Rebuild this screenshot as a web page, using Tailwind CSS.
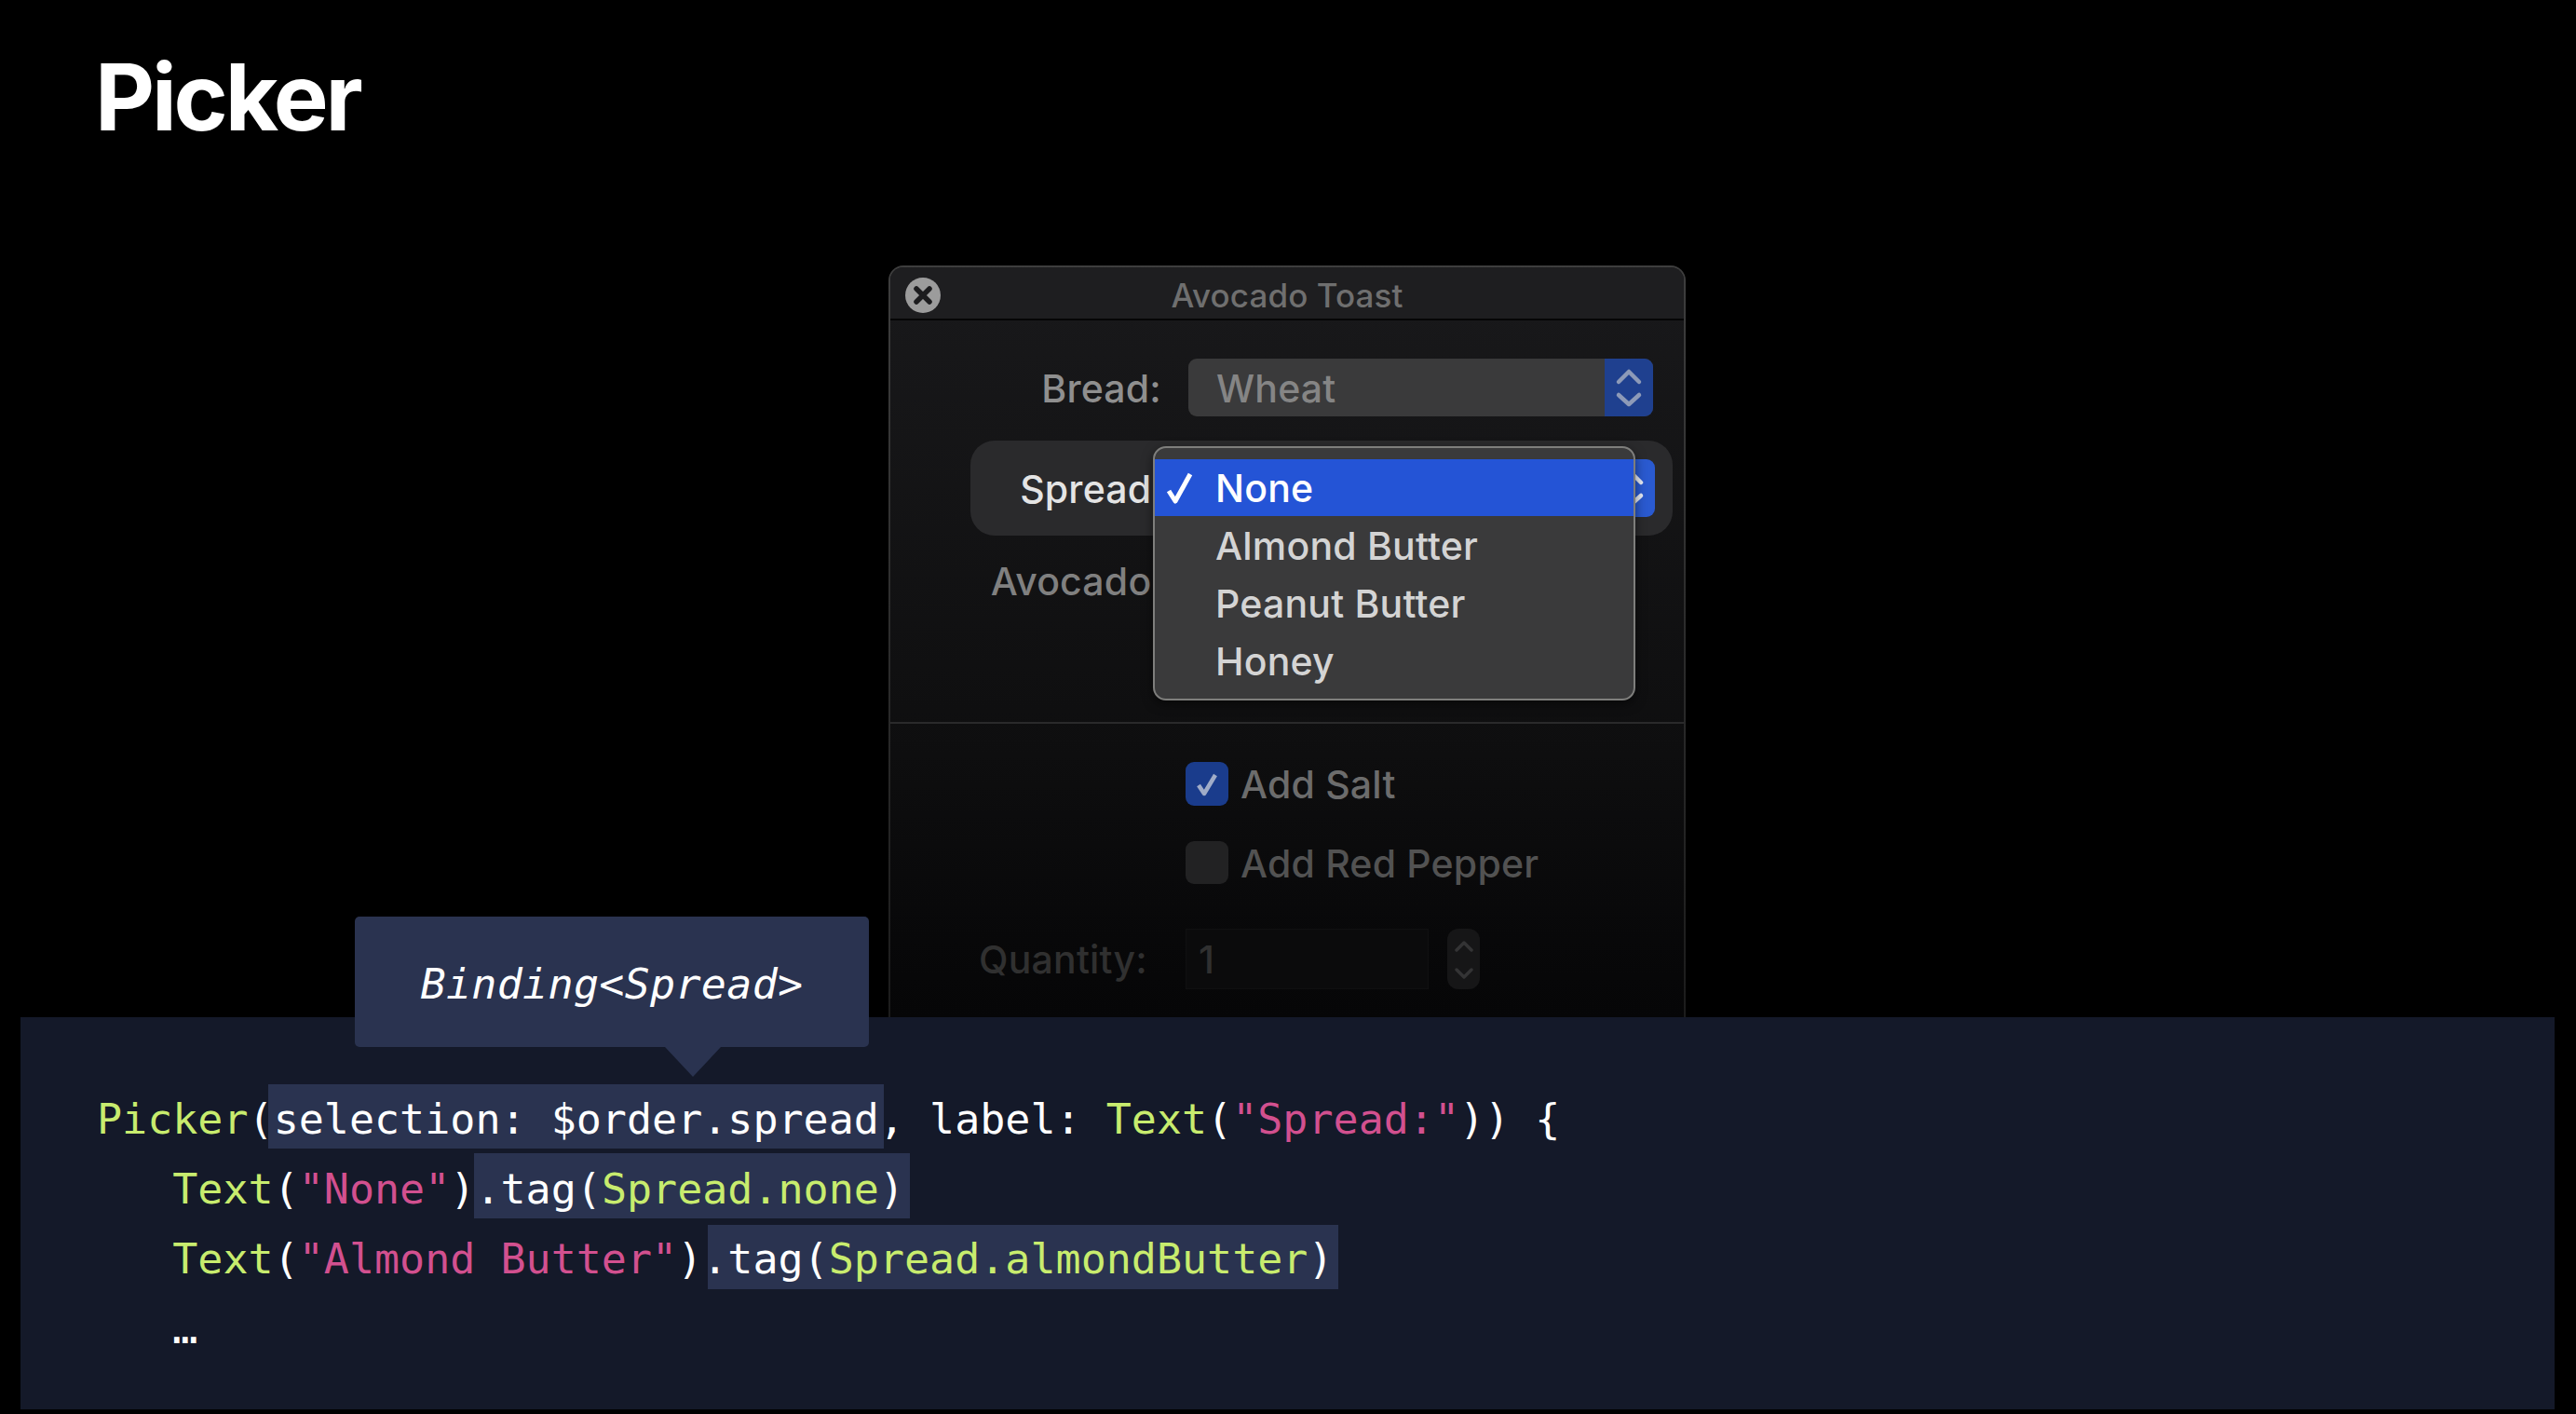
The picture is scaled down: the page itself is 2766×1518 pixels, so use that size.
<!DOCTYPE html>
<html>
<head>
<meta charset="utf-8">
<script src="https://cdn.jsdelivr.net/npm/@tailwindcss/browser@4"></script>
<title>Picker</title>
</head>
<body class="bg-black">
<div class="relative w-[2766px] h-[1518px] overflow-hidden bg-black flex flex-col font-['Inter',sans-serif]">
  <!-- Header -->
  <header class="h-[285px] shrink-0 pl-[102px] pt-[44px]">
    <h1 class="text-[99px] leading-[120px] font-bold tracking-[-3.2px] text-white">Picker</h1>
  </header>

  <!-- Window -->
  <div class="relative ml-[954px] w-[856px] h-[807px] shrink-0 rounded-t-[16px] bg-gradient-to-b from-[#3e3e3e] via-[#2c2c2c] to-[#1c1c1c] px-[2px] pt-[2px]">
    <div class="h-full rounded-t-[14px] bg-gradient-to-b from-[#19191b] via-[#0e0e0f] via-65% to-[#060607] flex flex-col">
      <div class="relative h-[57px] shrink-0 flex items-center justify-center bg-[#1e1e20] border-b-2 border-[#060606] rounded-t-[14px]">
        <svg class="absolute left-[16px] top-[10px]" width="38" height="40" viewBox="0 0 38 40"><circle cx="19" cy="20" r="19" fill="#9c9c9c"/><path d="M12 13 L26 27 M26 13 L12 27" stroke="#1c1c1e" stroke-width="5.5" stroke-linecap="round"/></svg>
        <span class="pt-[5px] text-[35px] font-medium text-[#6f6f6f] tracking-[0.1px]">Avocado Toast</span>
      </div>

      <!-- Bread -->
      <div class="mt-[41px] h-[62px] flex items-center shrink-0">
        <div class="w-[291px] pt-[3px] text-right text-[41px] font-medium tracking-[0.2px] text-[#8f8f8f]">Bread:</div>
        <div class="ml-[29px] w-[499px] h-[62px] flex rounded-[9px] overflow-hidden bg-[#3a3a3b]">
          <div class="flex-1 pl-[30px] pt-[3px] flex items-center text-[41px] font-medium tracking-[0.2px] text-[#858585]">Wheat</div>
          <div class="w-[52px] bg-[#1f408f] flex items-center justify-center">
            <svg width="30" height="44" viewBox="0 0 30 44" fill="none" stroke="#8d9ab8" stroke-width="4.5" stroke-linecap="round" stroke-linejoin="round"><path d="M4 16 L15 5 L26 16"/><path d="M4 30 L15 40 L26 30"/></svg>
          </div>
        </div>
      </div>

      <!-- Spread -->
      <div class="mt-[26px] ml-[86px] w-[754px] h-[102px] shrink-0 rounded-[26px] bg-[#2a2a2c] flex items-center">
        <div class="w-[207px] pt-[3px] text-right text-[41px] font-medium tracking-[0.2px] text-[#e4e4e4]">Spread:</div>
        <div class="ml-[27px] w-[501px] h-[62px] rounded-[9px] bg-[#2a5ad0] flex justify-end overflow-hidden">
          <div class="w-[52px] flex items-center justify-center">
            <svg width="30" height="44" viewBox="0 0 30 44" fill="none" stroke="#e8ecf5" stroke-width="4.5" stroke-linecap="round" stroke-linejoin="round"><path d="M4 16 L15 5 L26 16"/><path d="M4 30 L15 40 L26 30"/></svg>
          </div>
        </div>
      </div>

      <!-- Avocado -->
      <div class="mt-[17px] h-[62px] shrink-0 flex items-center">
        <div class="w-[293px] pt-[3px] text-right text-[41px] font-medium tracking-[0.2px] text-[#808080]">Avocado:</div>
      </div>

      <div class="mt-[121px] h-[2px] shrink-0 bg-[#2a2a2b]"></div>

      <!-- Checkboxes -->
      <div class="mt-[41px] ml-[317px] h-[47px] shrink-0 flex items-center">
        <div class="w-[46px] h-[47px] rounded-[9px] bg-[#1a3c8c] flex items-center justify-center">
          <svg width="32" height="32" viewBox="0 0 32 32" fill="none" stroke="#a0acc8" stroke-width="4.5" stroke-linejoin="round"><path d="M7 17 L13 26 L25 6"/></svg>
        </div>
        <span class="ml-[13px] pt-[3px] text-[41px] font-medium tracking-[0.2px] text-[#6c6c6c]">Add Salt</span>
      </div>
      <div class="mt-[38px] ml-[317px] h-[46px] shrink-0 flex items-center">
        <div class="w-[46px] h-[46px] rounded-[9px] bg-[#222223]"></div>
        <span class="ml-[13px] pt-[3px] text-[41px] font-medium tracking-[0.2px] text-[#525252]">Add Red Pepper</span>
      </div>

      <!-- Quantity -->
      <div class="mt-[48px] h-[65px] shrink-0 flex items-center">
        <div class="w-[276px] pt-[3px] text-right text-[41px] font-medium tracking-[0.2px] text-[#303030]">Quantity:</div>
        <div class="ml-[41px] w-[261px] h-[65px] bg-[#0b0b0c] border border-[#101011] pl-[13px] pt-[3px] flex items-center text-[41px] font-medium text-[#303030]">1</div>
        <div class="ml-[20px] w-[35px] h-[65px] rounded-[12px] bg-[#161617] flex items-center justify-center">
          <svg width="22" height="50" viewBox="0 0 22 50" fill="none" stroke="#343435" stroke-width="3.5" stroke-linecap="round" stroke-linejoin="round"><path d="M3 15 L11 7 L19 15"/><path d="M3 36 L11 44 L19 36"/></svg>
        </div>
      </div>
    </div>

    <!-- Popup menu -->
    <div class="absolute left-[284px] top-[194px] w-[518px] h-[273px] rounded-[14px] border-2 border-[#7e7e7c] bg-[#3a3a3b] pt-[12px] text-[41px] font-medium tracking-[0.2px] text-[#d4d4d4] shadow-[0_4px_12px_rgba(0,0,0,0.5)]">
      <div class="h-[61px] bg-[#2454d6] flex items-center pt-[3px] text-white relative pl-[65px]">
        <svg class="absolute left-[11px] top-[14px]" width="31" height="34" viewBox="0 0 31 34" fill="none" stroke="#ffffff" stroke-width="5" stroke-linejoin="round"><path d="M4 20 L11 31 L27 2"/></svg>None
      </div>
      <div class="h-[62px] flex items-center pt-[3px] pl-[65px]">Almond Butter</div>
      <div class="h-[62px] flex items-center pt-[3px] pl-[65px]">Peanut Butter</div>
      <div class="h-[62px] flex items-center pt-[3px] pl-[65px]">Honey</div>
    </div>
  </div>

  <!-- Code panel -->
  <div class="isolate ml-[22px] w-[2721px] h-[421px] shrink-0 bg-[#141929] pl-[82px] pt-[72px] font-['DejaVu_Sans_Mono',monospace] text-[45px] text-white">
    <div class="h-[75px] leading-[75px] whitespace-pre"><span class="text-[#c8ec6e]">Picker</span>(<span class="relative inline-block"><span class="absolute -z-10 top-[0px] bottom-[6px] -left-[6px] -right-[5px] bg-[#2a3350]"></span>selection: $order.spread</span>, label: <span class="text-[#c8ec6e]">Text</span>(<span class="text-[#d2508f]">"Spread:"</span>)) {</div>
    <div class="h-[75px] leading-[75px] whitespace-pre">   <span class="text-[#c8ec6e]">Text</span>(<span class="text-[#d2508f]">"None"</span>)<span class="relative inline-block"><span class="absolute -z-10 -top-[1px] bottom-[6px] -left-[1px] -right-[6px] bg-[#2a3350]"></span>.tag(<span class="text-[#c8ec6e]">Spread.none</span>)</span></div>
    <div class="h-[75px] leading-[75px] whitespace-pre">   <span class="text-[#c8ec6e]">Text</span>(<span class="text-[#d2508f]">"Almond Butter"</span>)<span class="relative inline-block"><span class="absolute -z-10 top-[1px] bottom-[5px] left-[6px] -right-[5px] bg-[#2a3350]"></span>.tag(<span class="text-[#c8ec6e]">Spread.almondButter</span>)</span></div>
    <div class="h-[75px] leading-[75px] whitespace-pre">   …</div>
  </div>

  <!-- Tooltip -->
  <div class="absolute left-[381px] top-[984px] w-[552px] h-[140px] rounded-[5px] bg-[#2a3350] pt-[5px] flex items-center justify-center font-['DejaVu_Sans_Mono',monospace] italic text-[45px] tracking-[0.3px] text-white">Binding&lt;Spread&gt;</div>
  <svg class="absolute left-[714px] top-[1124px]" width="60" height="32" viewBox="0 0 60 32"><path d="M0 0 H60 L30 32 Z" fill="#2a3350"/></svg>
</div>
</body>
</html>
